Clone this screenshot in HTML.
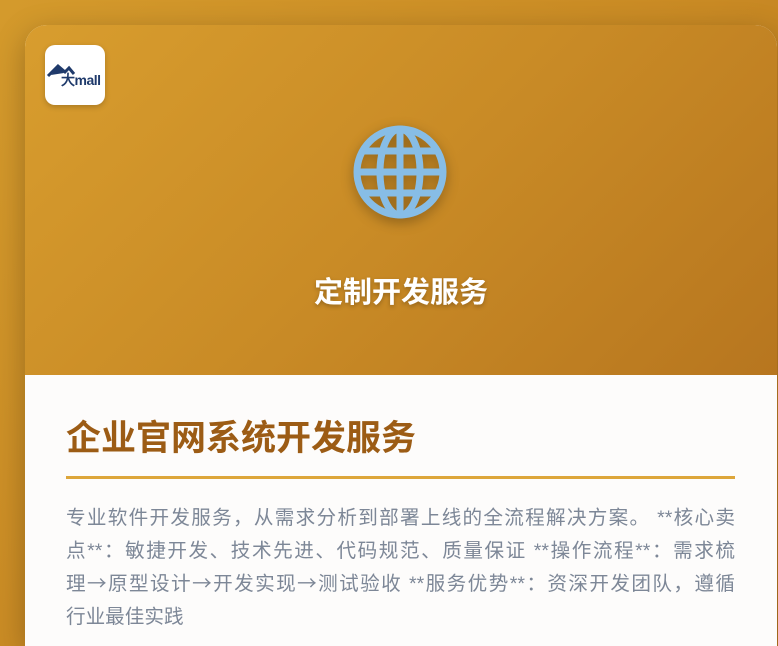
<!DOCTYPE html>
<html><head><meta charset="utf-8"><style>
html,body{margin:0;padding:0;width:778px;height:646px;overflow:hidden}
body{background:linear-gradient(135deg,#d49a2c 0%,#c98a24 50%,#b3741e 100%);font-family:"Liberation Sans","Noto Sans CJK SC",sans-serif;position:relative}
.card{position:absolute;left:25px;top:25px;width:752px;height:621px;border-radius:22px 22px 0 0;overflow:hidden;box-shadow:0 8px 30px rgba(0,0,0,.25);background:#fdfcfb}
.hd{position:absolute;left:0;top:0;width:100%;height:350px;background:linear-gradient(135deg,#d89d2e 0%,#c98b26 50%,#b7761f 100%)}
.logo{position:absolute;left:20px;top:20px;width:60px;height:60px;background:#fff;border-radius:10px;box-shadow:0 2px 6px rgba(0,0,0,.2)}
.ht{position:absolute;left:0;width:100%;top:244px;text-align:center;color:#fff;font-weight:bold;font-size:29px;text-shadow:0 2px 4px rgba(0,0,0,.25)}
.globe{position:absolute;left:327px;top:99px;filter:drop-shadow(0 4px 6px rgba(0,0,0,.3))}
h1{position:absolute;left:41px;top:392px;margin:0;font-size:35px;color:#9c5c15;font-weight:bold;line-height:44px}
.line{position:absolute;left:41px;top:451px;width:669px;height:3px;background:#dda63a}
.p{position:absolute;left:41px;top:477px;width:669px;margin:0;font-size:19.6px;line-height:33px;color:#7d8797}
.p div{height:33px;text-align:justify;text-align-last:justify;white-space:nowrap}
.p div.l{text-align-last:left}
.a{font-family:"Noto Sans CJK SC",sans-serif;line-height:1}
</style></head><body>
<div class="card">
<div class="hd">
<div class="logo"><svg width="60" height="60" viewBox="0 0 60 60">
<path d="M3 31 L13 21 L20 27 L24 23 L29 29" fill="none" stroke="#1f3a6b" stroke-width="3"/>
<path d="M6 30 L13 22 L19 28Z" fill="#1f3a6b"/>
<text x="16" y="40" font-family="Liberation Sans" font-weight="bold" font-size="14" fill="#1f3a6b" textLength="40">大mall</text>
</svg></div>
<svg class="globe" width="96" height="96" viewBox="0 0 96 96" fill="none" stroke="#87bde6" stroke-width="7">
<circle cx="48" cy="48" r="43"/>
<ellipse cx="48" cy="48" rx="20" ry="43"/>
<line x1="48" y1="5" x2="48" y2="91"/>
<line x1="5" y1="48" x2="91" y2="48"/>
<path d="M12 27 H84 M12 69 H84"/>
</svg>
<div class="ht">定制开发服务</div>
</div>
<h1>企业官网系统开发服务</h1>
<div class="line"></div>
<div class="p">
<div>专业软件开发服务，从需求分析到部署上线的全流程解决方案。 **核心卖</div>
<div>点**：敏捷开发、技术先进、代码规范、质量保证 **操作流程**：需求梳</div>
<div>理<span class="a">→</span>原型设计<span class="a">→</span>开发实现<span class="a">→</span>测试验收 **服务优势**：资深开发团队，遵循</div>
<div class="l">行业最佳实践</div>
</div>
</div>
</body></html>
